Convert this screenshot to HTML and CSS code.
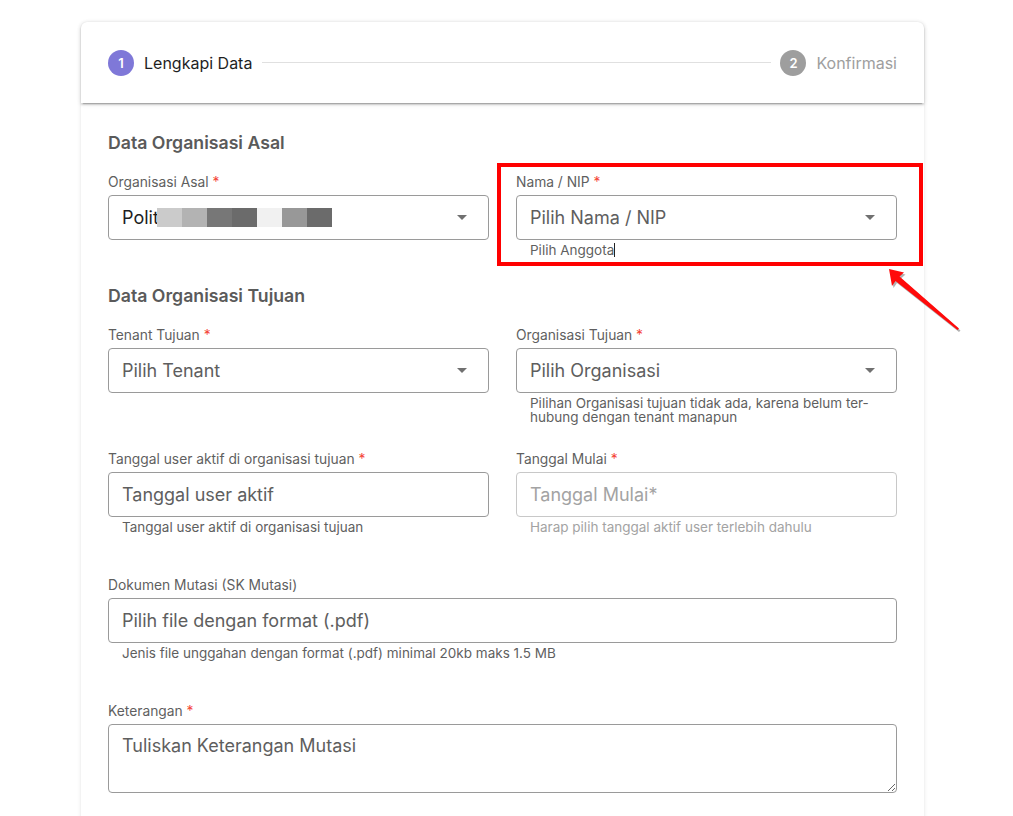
FILE: index.html
```
<!DOCTYPE html>
<html lang="id">
<head>
<meta charset="utf-8">
<title>Mutasi</title>
<link rel="stylesheet" href="styles.css">
</head>
<body>
<div class="page">
  <div class="card">
    <div class="stepper">
      <div class="step active"><span class="dot">1</span><span class="step-label">Lengkapi Data</span></div>
      <div class="step-line"></div>
      <div class="step"><span class="dot grey">2</span><span class="step-label grey-text">Konfirmasi</span></div>
    </div>
    <div class="body">
      <h2 class="section-title">Data Organisasi Asal</h2>
      <div class="grid">
        <div class="field">
          <label class="label">Organisasi Asal <span class="req">*</span></label>
          <div class="input select">
            <span class="value">Polit</span>
            <span class="redact">
              <i style="background:#cbcbcb"></i><i style="background:#b3b3b3"></i><i style="background:#777777"></i><i style="background:#6b6b6b"></i><i style="background:#f1f1f1"></i><i style="background:#989898"></i><i style="background:#6b6b6b"></i>
            </span>
            <span class="caret"></span>
          </div>
          <div class="details"></div>
        </div>
        <div class="field">
          <label class="label">Nama / NIP <span class="req">*</span></label>
          <div class="input select"><span class="placeholder">Pilih Nama / NIP</span><span class="caret"></span></div>
          <div class="details">Pilih Anggota<span class="cursor"></span></div>
        </div>
      </div>

      <h2 class="section-title second">Data Organisasi Tujuan</h2>
      <div class="grid">
        <div class="field">
          <label class="label">Tenant Tujuan <span class="req">*</span></label>
          <div class="input select"><span class="placeholder">Pilih Tenant</span><span class="caret"></span></div>
          <div class="details two"></div>
        </div>
        <div class="field">
          <label class="label">Organisasi Tujuan <span class="req">*</span></label>
          <div class="input select"><span class="placeholder">Pilih Organisasi</span><span class="caret"></span></div>
          <div class="details two">Pilihan Organisasi tujuan tidak ada, karena belum ter-<br>hubung dengan tenant manapun</div>
        </div>
        <div class="field">
          <label class="label">Tanggal user aktif di organisasi tujuan <span class="req">*</span></label>
          <div class="input"><span class="placeholder">Tanggal user aktif</span></div>
          <div class="details">Tanggal user aktif di organisasi tujuan</div>
        </div>
        <div class="field">
          <label class="label">Tanggal Mulai <span class="req">*</span></label>
          <div class="input disabled"><span class="placeholder">Tanggal Mulai*</span></div>
          <div class="details light">Harap pilih tanggal aktif user terlebih dahulu</div>
        </div>
        <div class="field full">
          <label class="label">Dokumen Mutasi (SK Mutasi)</label>
          <div class="input"><span class="placeholder">Pilih file dengan format (.pdf)</span></div>
          <div class="details">Jenis file unggahan dengan format (.pdf) minimal 20kb maks 1.5 MB</div>
        </div>
        <div class="field full">
          <label class="label">Keterangan <span class="req">*</span></label>
          <textarea class="textarea" placeholder="Tuliskan Keterangan Mutasi"></textarea>
        </div>
      </div>
    </div>
  </div>

  <div class="highlight"></div>
  <svg class="arrow" width="90" height="85" viewBox="0 0 90 85">
    <polygon points="9,19 24,22.5 19.5,26.5 79,78.5 77.5,80 15.5,31 12,36" fill="rgba(0,0,0,0.3)" transform="translate(1.5,2)"/>
    <polygon points="9,19 24,22.5 19.5,26.5 79,78.5 77.5,80 15.5,31 12,36" fill="#ff0a0a"/>
  </svg>
</div>
</body>
</html>
```
FILE: styles.css
```
* { box-sizing: border-box; }
html, body { margin: 0; padding: 0; background: #ffffff; }
body { font-family: Inter, "Noto Sans", "Liberation Sans", sans-serif; color: #222; }

.page { position: relative; padding: 22px 0 0 81px; height: 816px; overflow: hidden; }

.card {
  width: 843px;
  background: #fff;
  border-radius: 6px;
  box-shadow: 0 1px 4px rgba(0,0,0,0.10), 0 0 1px rgba(0,0,0,0.08);
  min-height: 900px;
}

.stepper {
  height: 81px;
  display: flex;
  align-items: center;
  padding: 0 27px;
  border-radius: 6px 6px 0 0;
  box-shadow: 0 3px 1px -2px rgba(0,0,0,.2), 0 2px 2px 0 rgba(0,0,0,.14), 0 1px 5px 0 rgba(0,0,0,.12);
  position: relative;
}
.step { display: flex; align-items: center; gap: 10px; }
.dot {
  width: 26px; height: 26px; border-radius: 50%;
  background: #7f78d8; color: #fff;
  font-size: 13px; font-weight: 600;
  display: flex; align-items: center; justify-content: center;
}
.dot.grey { background: #9e9e9e; }
.step-label { font-size: 16px; color: #1f1f1f; }
.step-label.grey-text { color: #9e9e9e; }
.step-line { flex: 1; height: 1px; background: #e0e0e0; margin: 0 9px 0 10px; }

.body { padding: 28px 27px 0; }
.section-title {
  margin: 0 0 17px;
  font-size: 17.7px; line-height: 24px; font-weight: 600; color: #5a5a5a;
}
.section-title.second { margin-top: 14px; }

.grid {
  display: grid;
  grid-template-columns: 1fr 1fr;
  column-gap: 27px;
  row-gap: 28px;
}
.field { display: flex; flex-direction: column; }
.field.full { grid-column: 1 / 3; }

.label { font-size: 13.8px; line-height: 20px; color: #5f5f5f; margin-bottom: 3px; white-space: nowrap; }
.req { color: #f44336; }

.input {
  height: 45px;
  border: 1px solid #9a9a9a;
  border-radius: 4px;
  display: flex; align-items: center;
  padding: 0 13px;
  font-size: 18px;
  position: relative;
}
.input.disabled { border-color: #c8c8c8; }
.input.disabled .placeholder { color: #a3a3a3; }
.value { color: #1e1e1e; }
.placeholder { color: #5e5e5e; }
.caret {
  position: absolute; right: 21px; top: 19px;
  width: 0; height: 0;
  border-left: 5px solid transparent; border-right: 5px solid transparent;
  border-top: 5px solid #707070;
}
.redact { display: flex; height: 19px; margin-left: -2px; }
.redact i { display: block; width: 25px; height: 19px; }

.details {
  height: 30px;
  padding: 3px 14px 0;
  font-size: 13.5px; line-height: 14px; color: #5f5f5f;
  white-space: nowrap;
}
.details.two { height: 28px; }
.details.light { color: #a3a3a3; }
.cursor { display: inline-block; width: 1px; height: 14px; background: #222; vertical-align: -2px; }

.textarea {
  height: 69px;
  border: 1px solid #9a9a9a;
  border-radius: 4px;
  padding: 10px 13px;
  font-family: Inter, "Noto Sans", "Liberation Sans", sans-serif;
  font-size: 18px;
  color: #222;
  resize: vertical;
  outline: none;
}
.textarea::placeholder { color: #5e5e5e; opacity: 1; }

.highlight {
  position: absolute;
  left: 497px; top: 163px;
  width: 426px; height: 103px;
  border: 4px solid #ff0000;
}
.arrow { position: absolute; left: 880px; top: 250px; }
```
